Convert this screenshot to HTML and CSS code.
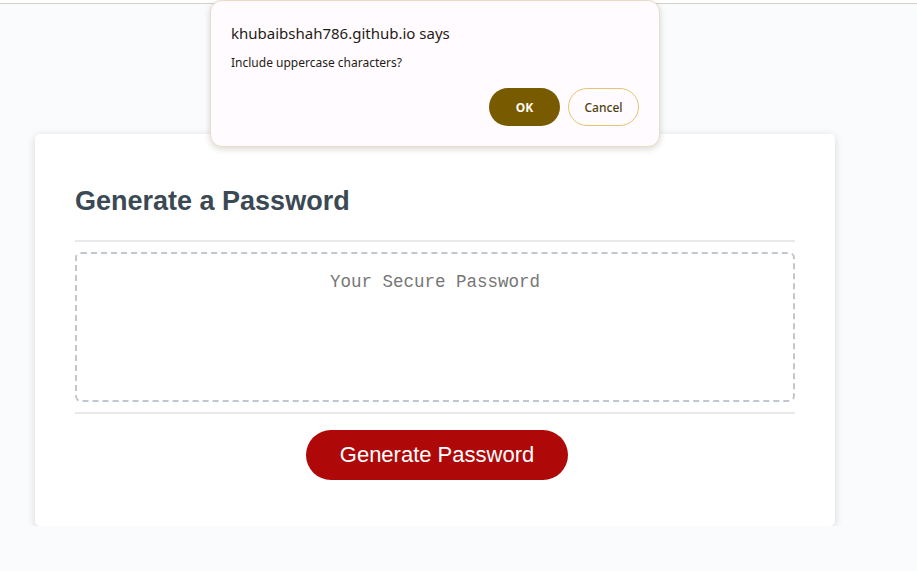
FILE: index.html
```html
<!DOCTYPE html>
<html lang="en">
<head>
<meta charset="UTF-8">
<title>Password Generator</title>
<link rel="stylesheet" href="styles.css">
</head>
<body>
<div class="chrome-edge"></div>
<div class="wrapper">
  <div class="card">
    <div class="card-header">
      <h2>Generate a Password</h2>
    </div>
    <div class="card-body">
      <textarea readonly id="password" placeholder="Your Secure Password" aria-label="Generated Password"></textarea>
    </div>
    <div class="card-footer">
      <button id="generate" class="btn">Generate Password</button>
    </div>
  </div>
</div>

<div class="dialog" role="alertdialog">
  <div class="dialog-title">khubaibshah786.github.io says</div>
  <div class="dialog-msg">Include uppercase characters?</div>
  <div class="dialog-actions">
    <button class="dlg-btn dlg-ok">OK</button>
    <button class="dlg-btn dlg-cancel">Cancel</button>
  </div>
</div>
</body>
</html>
```

FILE: styles.css
```css
*, *::before, *::after {
  box-sizing: border-box;
}

html, body {
  margin: 0;
  padding: 0;
  font-family: "Liberation Sans", Arial, sans-serif;
  background-color: #f9fbfd;
}

.chrome-edge {
  height: 4px;
  background: #ffffff;
  border-bottom: 1px solid #d6d1c9;
}

.wrapper {
  padding: 130px 20px 0;
}

.card {
  background-color: #ffffff;
  border-radius: 5px;
  box-shadow: rgba(0, 0, 0, 0.15) 0px 2px 8px 0px;
  color: hsl(206, 17%, 28%);
  font-size: 18px;
  margin: 0 0 0 15px;
  width: 800px;
  padding: 30px 40px;
}

.card-header h2 {
  margin: 22px 0 23px;
  font-size: 27px;
  line-height: 31px;
  font-weight: bold;
}

.card-header::after,
.card-footer::before {
  content: "";
  display: block;
  width: 100%;
  height: 2px;
  background: #e7e9eb;
}

.card-body {
  min-height: 100px;
  padding: 10px 0;
}

textarea {
  display: block;
  width: 100%;
  height: 150px;
  margin: 0;
  padding: 17px 10px 10px;
  font-family: "Liberation Mono", "DejaVu Sans Mono", monospace;
  font-size: 17.5px;
  line-height: 22px;
  text-align: center;
  border: 2px dashed #c0c7cf;
  border-radius: 6px;
  resize: none;
  overflow: hidden;
  background: #ffffff;
  color: hsl(206, 17%, 28%);
  outline: none;
}

textarea::placeholder {
  color: #767676;
}

.card-footer {
  text-align: center;
}

.btn {
  border: none;
  background-color: hsl(360, 91%, 36%);
  border-radius: 25px;
  color: #ffffff;
  display: inline-block;
  font-family: "Liberation Sans", Arial, sans-serif;
  font-size: 22px;
  line-height: 22px;
  margin: 16px 16px 16px 20px;
  padding: 14px 34px;
  text-align: center;
  cursor: pointer;
}

/* browser alert dialog */
.dialog {
  position: absolute;
  left: 210px;
  top: 0;
  width: 450px;
  height: 147px;
  background: #fffbfe;
  border: 1px solid #e9dcc8;
  border-radius: 12px;
  box-shadow: 0 2px 6px rgba(60, 40, 0, 0.18);
  padding: 22px 20px 20px;
  display: flex;
  flex-direction: column;
  font-family: "Noto Sans", "Open Sans", sans-serif;
}

.dialog-title {
  font-size: 15px;
  line-height: 20px;
  color: #1f1b16;
}

.dialog-msg {
  margin-top: 12px;
  font-size: 12px;
  line-height: 16px;
  color: #1f1b16;
}

.dialog-actions {
  margin-top: 17px;
  display: flex;
  justify-content: flex-end;
  gap: 8px;
}

.dlg-btn {
  width: 71px;
  height: 38px;
  border-radius: 19px;
  font-family: "Noto Sans", "Open Sans", sans-serif;
  font-size: 12px;
  cursor: pointer;
  padding: 0;
}

.dlg-ok {
  background: #785a00;
  border: none;
  color: #fffbf0;
  font-weight: bold;
}

.dlg-cancel {
  background: #fffbfe;
  border: 1px solid #e6c46f;
  color: #4f3f10;
  font-weight: 500;
}
```
